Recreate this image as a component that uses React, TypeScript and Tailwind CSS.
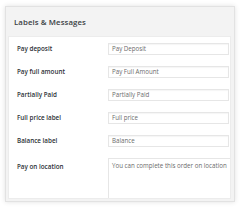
const rows = [
  { label: 'Pay deposit', value: 'Pay Deposit' },
  { label: 'Pay full amount', value: 'Pay Full Amount' },
  { label: 'Partially Paid', value: 'Partially Paid' },
  { label: 'Full price label', value: 'Full price' },
  { label: 'Balance label', value: 'Balance' },
];

export default function App() {
  return (
    <div className="w-[242px] h-[208px] bg-white pt-[6px] pl-[5px] font-['Open_Sans',sans-serif] overflow-hidden">
      <div className="w-[230px] h-[196px] bg-[#f3f3f3] border border-[#e2e2e2] shadow-[0_0_5px_rgba(0,0,0,0.12)] flex flex-col">
        <div className="h-[29px] shrink-0 flex items-center pl-[8px] pt-[3px]">
          <h2 className="text-[7.8px] font-semibold text-[#3a3f44] tracking-[0.1px]">Labels &amp; Messages</h2>
        </div>
        <div className="flex-1 bg-white ml-[2px] mr-[3px] mb-[2px] border border-[#ececec] pt-[6px] flex flex-col gap-[11px] overflow-hidden">
          {rows.map((row) => (
            <div key={row.label} className="flex items-center h-[12px]">
              <span className="w-[99px] shrink-0 pl-[8px] text-[6.3px] font-semibold text-[#2c3136]">{row.label}</span>
              <div className="w-[121px] h-[12px] border border-[#e6e6e6] shadow-[inset_0_1px_1px_rgba(0,0,0,0.04)] flex items-center pl-[3px] text-[6.2px] text-[#6b6b6b]">
                {row.value}
              </div>
            </div>
          ))}
          <div className="flex items-start flex-1">
            <span className="w-[99px] shrink-0 pl-[8px] pt-[4px] text-[6.3px] font-semibold text-[#2c3136]">Pay on location</span>
            <div className="flex-1 h-[60px] border-l border-t border-[#e6e6e6] pl-[3px] pt-[2px] text-[6.2px] text-[#6b6b6b]">
              You can complete this order on location
            </div>
          </div>
        </div>
      </div>
    </div>
  );
}
